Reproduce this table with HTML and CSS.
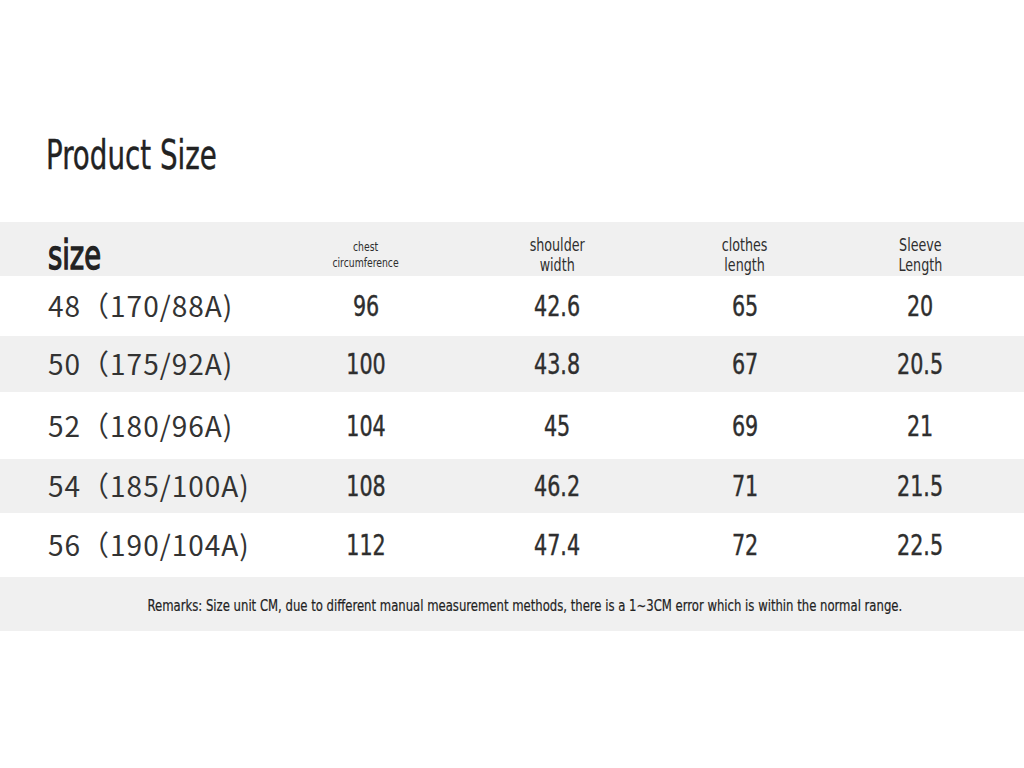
FILE: index.html
```html
<!DOCTYPE html>
<html lang="en">
<head>
<meta charset="utf-8">
<title>Product Size</title>
<link rel="stylesheet" href="styles.css">
</head>
<body>
<main class="page">
  <h1 class="title"><span class="title-text">Product Size</span></h1>
  <section class="table">
    <div class="row head">
      <div class="cell first"><span class="size-label">size</span></div>
      <div class="cell small"><span class="cx">chest<br>circumference</span></div>
      <div class="cell label"><span class="cx">shoulder<br>width</span></div>
      <div class="cell label"><span class="cx">clothes<br>length</span></div>
      <div class="cell label"><span class="cx">Sleeve<br>Length</span></div>
    </div>
    <div class="row r1">
      <div class="cell first sz">48（170/88A)</div>
      <div class="cell num"><span class="cx">96</span></div>
      <div class="cell num"><span class="cx">42.6</span></div>
      <div class="cell num"><span class="cx">65</span></div>
      <div class="cell num"><span class="cx">20</span></div>
    </div>
    <div class="row r2 gray">
      <div class="cell first sz">50（175/92A)</div>
      <div class="cell num"><span class="cx">100</span></div>
      <div class="cell num"><span class="cx">43.8</span></div>
      <div class="cell num"><span class="cx">67</span></div>
      <div class="cell num"><span class="cx">20.5</span></div>
    </div>
    <div class="row r3">
      <div class="cell first sz">52（180/96A)</div>
      <div class="cell num"><span class="cx">104</span></div>
      <div class="cell num"><span class="cx">45</span></div>
      <div class="cell num"><span class="cx">69</span></div>
      <div class="cell num"><span class="cx">21</span></div>
    </div>
    <div class="row r4 gray">
      <div class="cell first sz">54（185/100A)</div>
      <div class="cell num"><span class="cx">108</span></div>
      <div class="cell num"><span class="cx">46.2</span></div>
      <div class="cell num"><span class="cx">71</span></div>
      <div class="cell num"><span class="cx">21.5</span></div>
    </div>
    <div class="row r5">
      <div class="cell first sz">56（190/104A)</div>
      <div class="cell num"><span class="cx">112</span></div>
      <div class="cell num"><span class="cx">47.4</span></div>
      <div class="cell num"><span class="cx">72</span></div>
      <div class="cell num"><span class="cx">22.5</span></div>
    </div>
    <div class="remarks"><span class="cx">Remarks: Size unit CM, due to different manual measurement methods, there is a 1~3CM error which is within the normal range.</span></div>
  </section>
</main>
</body>
</html>
```

FILE: styles.css
```css
html, body {
  margin: 0;
  padding: 0;
  background: #ffffff;
}

.page {
  width: 1024px;
  height: 768px;
  padding-top: 129px;
  box-sizing: border-box;
  color: #2e2e2e;
  font-family: "DejaVu Sans Condensed", "DejaVu Sans", sans-serif;
  font-stretch: condensed;
}

.cx {
  display: inline-block;
  transform-origin: center center;
  white-space: nowrap;
}

.title {
  margin: 0 0 0 46px;
  height: 93px;
  font-size: 40px;
  line-height: 52px;
  font-weight: normal;
  color: #222222;
  -webkit-text-stroke: 0.4px #222222;
}

.title-text {
  display: inline-block;
  transform: scaleX(0.77);
  transform-origin: left center;
}

.table {
  display: flex;
  flex-direction: column;
}

.row {
  display: grid;
  grid-template-columns: 222px 192px 190px 186px 164px;
  padding-left: 48px;
  align-items: center;
}

.gray, .head {
  background: #f0f0f0;
}

.head { height: 54px; }
.r1 { height: 60px; }
.r2 { height: 56px; }
.r3 { height: 67px; }
.r4 { height: 54px; }
.r5 { height: 64px; }

.cell {
  text-align: center;
}

.cell.first {
  text-align: left;
}

.head .first {
  align-self: end;
}

.size-label {
  display: inline-block;
  font-size: 40px;
  line-height: 40px;
  font-weight: normal;
  color: #222222;
  -webkit-text-stroke: 1.3px #222222;
  padding-bottom: 1px;
  transform: scaleX(0.76);
  transform-origin: left center;
}

.small {
  font-size: 12px;
  line-height: 16px;
  padding-top: 12px;
}

.small .cx {
  transform: scaleX(0.86);
}

.label {
  font-size: 17px;
  line-height: 20px;
  padding-top: 12px;
}

.label .cx {
  transform: scaleX(0.83);
}

.sz {
  font-family: "Noto Sans CJK SC", "Noto Sans", sans-serif;
  font-stretch: normal;
  font-size: 28px;
  letter-spacing: 1px;
  line-height: 32px;
  padding-bottom: 2px;
  color: #333333;
}

.num {
  font-size: 28px;
  line-height: 32px;
  padding-top: 2px;
  -webkit-text-stroke: 0.4px #2e2e2e;
}

.num .cx {
  transform: scaleX(0.82);
}

.remarks {
  height: 54px;
  background: #f0f0f0;
  display: flex;
  align-items: center;
  justify-content: center;
  font-size: 16px;
  color: #222222;
  padding-top: 3px;
  padding-left: 25px;
  box-sizing: border-box;
  -webkit-text-stroke: 0.2px #222222;
}

.remarks .cx {
  transform: scaleX(0.81);
}
```
